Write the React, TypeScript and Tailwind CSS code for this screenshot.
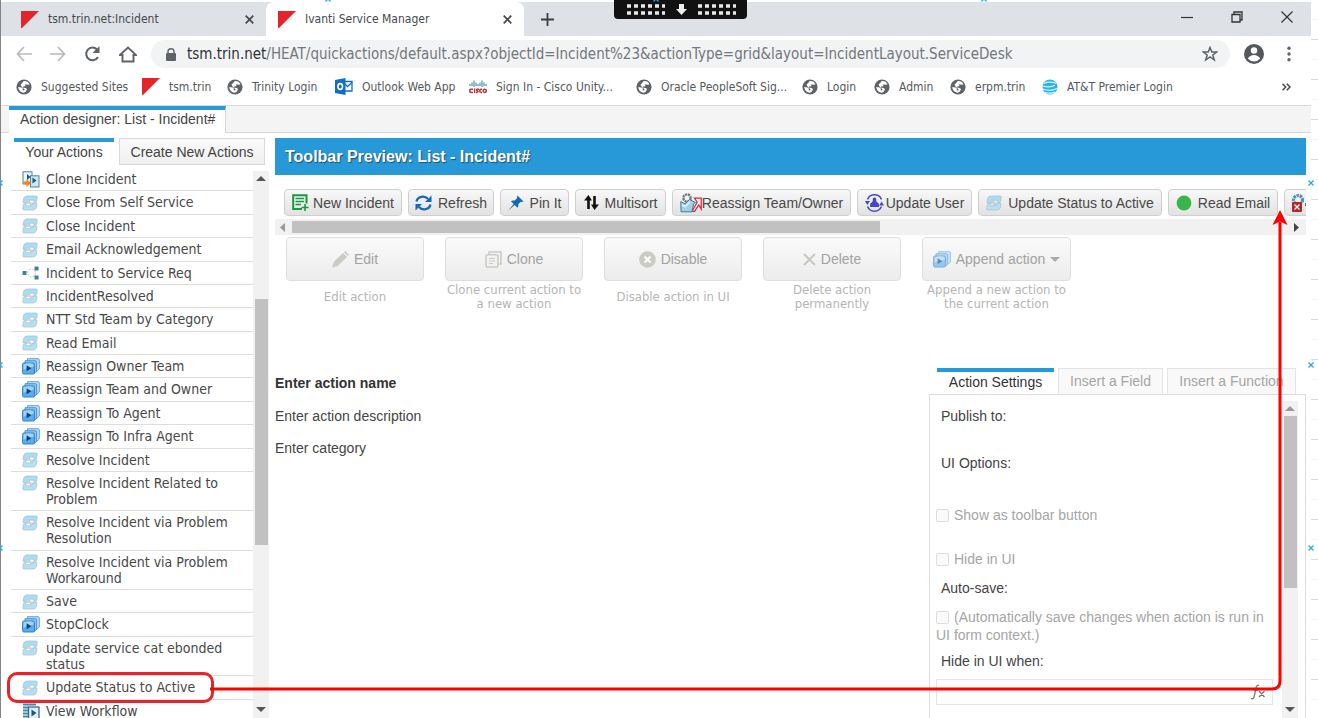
import type { ReactNode } from "react";

const UI = "font-['DejaVu_Sans_Condensed','DejaVu_Sans',sans-serif]";

function Flag() {
  return (
    <svg width="18" height="17" viewBox="0 0 18 17" className="shrink-0">
      <path d="M0 0H18L1 17H0Z" fill="#e3242b" />
    </svg>
  );
}

function Globe() {
  return (
    <svg width="16" height="16" viewBox="0 0 16 16" className="shrink-0">
      <circle cx="8" cy="8" r="7.6" fill="#5f6368" />
      <path d="M7.500 2.200C10 1.800 12.500 3 13.600 5.500L11 5.800 9.500 5 9.200 7.200 7 7.500 7.300 8.800 10 8.900 11 10.500 9.800 12.600 8 13.700C5 13.600 2.400 11.300 2.300 8L5.500 8.400 7 9.800 6.500 11.300 8.200 11.600 8.600 10.400 5.500 7.600 4.500 5.500 6 4.300Z" fill="#fff" />
    </svg>
  );
}

function Outlook() {
  return (
    <svg width="18" height="17" viewBox="0 0 18 17" className="shrink-0">
      <path d="M9 3.500H17V13H9" fill="#fff" stroke="#0f6fc6" strokeWidth="1.300" />
      <path d="M9 5L12.500 8.500 17 4.500" fill="none" stroke="#0f6fc6" strokeWidth="1.300" />
      <path d="M0 2L10.500 0V17L0 15Z" fill="#0f6fc6" />
      <ellipse cx="5.200" cy="8.500" rx="2.300" ry="2.900" fill="none" stroke="#fff" strokeWidth="1.600" />
    </svg>
  );
}

function Cisco() {
  return (
    <svg width="18" height="14" viewBox="0 0 18 14" className="shrink-0">
      <path d="M1 4V6M3 2.500V6M5 0.500V7M7 2.500V6M9 4V6M11 2.500V6M13 0.500V7M15 2.500V6M17 4V6" stroke="#4c93ad" strokeWidth="1.200" />
      <g fill="none" stroke="#b83a41" strokeWidth="1.500">
        <path d="M4 9.300H2.200A1.400 1.400 0 0 0 2.200 12.400H4M5.600 8.600V13M10 9.300H8Q7 10 8.400 10.800T8 12.400H7M13 9.300H12.200A1.400 1.400 0 0 0 12.200 12.400H13" />
        <circle cx="15.700" cy="10.800" r="1.600" />
      </g>
    </svg>
  );
}

function Att() {
  return (
    <svg width="16" height="16" viewBox="0 0 16 16" className="shrink-0">
      <circle cx="8" cy="8" r="7.500" fill="#25b4ec" />
      <path d="M2 4.200Q8 2 14 4.200M0.500 7Q8 9 13 6.300M1 10Q8 13 15 9.500M3 13.200Q8 15.200 13 13" stroke="#dff4fd" strokeWidth="1.200" fill="none" />
    </svg>
  );
}

function Save() {
  return (
    <svg width="16" height="16" viewBox="0 0 16 16" className="shrink-0">
      <path d="M4.500 1H14.500L15.300 2 14.600 6.500 12.500 7.800 11.500 5.200H6.500L5 6.200 3.800 8.300 1 7.700 1.500 4Q2.200 1.200 4.500 1Z" fill="#a6def7" stroke="#a9bcc6" strokeWidth=".7" />
      <path d="M11.500 15H1.500L.700 14 1.400 9.500 3.500 8.200 4.500 10.800H9.500L11 9.800 12.200 7.700 15 8.300 14.500 12Q13.800 14.800 11.500 15Z" fill="#b3e2f7" stroke="#a9bcc6" strokeWidth=".7" />
      <path d="M4.200 8.200L7.500 5.800V7.300L9.300 8 12 8 8.500 10.300V8.800L7 8.200Z" fill="#dbe9ef" stroke="#9db4bf" strokeWidth=".6" />
    </svg>
  );
}

function Stack() {
  return (
    <svg width="18" height="17" viewBox="0 0 18 17" className="shrink-0">
      <path d="M5.500.7H16Q17.300.7 17.300 2V11L14 14V4H5.500Z" fill="#b9dcf8" stroke="#5fa3dc" />
      <path d="M3 2.700H13.300Q14.600 2.700 14.600 4V13.500L12 15.500V6H3Z" fill="#8cc4f2" stroke="#4c97d8" />
      <rect x=".6" y="5" width="11.800" height="11" rx="1.300" fill="#5cabee" stroke="#2f82cc" />
      <path d="M1.500 6.500Q6 4.500 11.500 6V9Q5 9 1.500 12Z" fill="#a5d3f8" />
      <path d="M4.600 7.200L9.300 10.200 4.600 13.200Z" fill="#0b4373" />
    </svg>
  );
}

function CloneAction() {
  return (
    <svg width="18" height="17" viewBox="0 0 18 17" className="shrink-0">
      <rect x="1" y=".8" width="9" height="12" fill="#eaf4f9" stroke="#4c86a3" />
      <rect x="8.500" y="4.800" width="8.500" height="11.200" fill="#cfe5f0" stroke="#4c86a3" />
      <path d="M5 3L8.500 6 5 9ZM10.500 6.500L14.500 9.500 10.500 12.500Z" fill="#15577e" />
      <path d="M1 10.500H4.500V8L9 12 4.500 16V13.500H1Z" fill="#f5821f" />
    </svg>
  );
}

function Nodes() {
  return (
    <svg width="17" height="14" viewBox="0 0 17 14" className="shrink-0">
      <circle cx="9.500" cy="7" r="3.800" fill="none" stroke="#b8b8b8" strokeDasharray="1.500 1.500" />
      <path d="M.5 5H4.500V9H.5ZM12.500.5H16.500V4.500H12.500ZM12.500 9.500H16.500V13.500H12.500Z" fill="#3f8099" />
    </svg>
  );
}

function Workflow() {
  return (
    <svg width="18" height="17" viewBox="0 0 18 17" className="shrink-0">
      <path d="M1 1.500H14M1 4.500H6M1 7.500H6M1 10.500H6M1 13.500H6" stroke="#4a86ab" strokeWidth="1.800" />
      <rect x="6.500" y="4" width="10.500" height="12" fill="#e3eff6" stroke="#2d6e96" strokeWidth="1.300" />
      <path d="M9.500 6.500L14.500 10 9.500 13.500Z" fill="#15577e" />
    </svg>
  );
}

function Tri({ dir, color }: { dir: "up" | "down" | "left" | "right"; color: string }) {
  const d = { up: "M0 6L5 1 10 6Z", down: "M0 2H10L5 7Z", left: "M6 0V9L1 4.500Z", right: "M2 0V9L7 4.500Z" }[dir];
  return (
    <svg width="10" height="9" viewBox="0 0 10 9" className="shrink-0">
      <path d={d} fill={color} />
    </svg>
  );
}

const bookmarks: { icon: ReactNode; label: string; w: string }[] = [
  { icon: <Globe />, label: "Suggested Sites", w: "w-[126px]" },
  { icon: <Flag />, label: "tsm.trin", w: "w-[85px]" },
  { icon: <Globe />, label: "Trinity Login", w: "w-[108px]" },
  { icon: <Outlook />, label: "Outlook Web App", w: "w-[134px]" },
  { icon: <Cisco />, label: "Sign In - Cisco Unity...", w: "w-[167px]" },
  { icon: <Globe />, label: "Oracle PeopleSoft Sig...", w: "w-[166px]" },
  { icon: <Globe />, label: "Login", w: "w-[72px]" },
  { icon: <Globe />, label: "Admin", w: "w-[76px]" },
  { icon: <Globe />, label: "erpm.trin", w: "w-[92px]" },
  { icon: <Att />, label: "AT&T Premier Login", w: "w-[140px]" },
];

const actions: { icon: ReactNode; label: string; tall?: boolean; marked?: boolean }[] = [
  { icon: <CloneAction />, label: "Clone Incident" },
  { icon: <Save />, label: "Close From Self Service" },
  { icon: <Save />, label: "Close Incident" },
  { icon: <Save />, label: "Email Acknowledgement" },
  { icon: <Nodes />, label: "Incident to Service Req" },
  { icon: <Save />, label: "IncidentResolved" },
  { icon: <Save />, label: "NTT Std Team by Category" },
  { icon: <Save />, label: "Read Email" },
  { icon: <Stack />, label: "Reassign Owner Team" },
  { icon: <Stack />, label: "Reassign Team and Owner" },
  { icon: <Stack />, label: "Reassign To Agent" },
  { icon: <Stack />, label: "Reassign To Infra Agent" },
  { icon: <Save />, label: "Resolve Incident" },
  { icon: <Save />, label: "Resolve Incident Related to Problem", tall: true },
  { icon: <Save />, label: "Resolve Incident via Problem Resolution", tall: true },
  { icon: <Save />, label: "Resolve Incident via Problem Workaround", tall: true },
  { icon: <Save />, label: "Save" },
  { icon: <Stack />, label: "StopClock" },
  { icon: <Save />, label: "update service cat ebonded status", tall: true },
  { icon: <Save />, label: "Update Status to Active", marked: true },
  { icon: <Workflow />, label: "View Workflow" },
];

function NewIcon() {
  return (
    <svg width="17" height="17" viewBox="0 0 17 17" className="shrink-0">
      <path d="M10 15H1.200V1.200H14.500V9.500" fill="none" stroke="#189a3c" strokeWidth="2" />
      <path d="M3.500 4.500H12M3.500 7.500H12M3.500 10.500H9M13 10V17M9.500 13.500H16.500" stroke="#189a3c" strokeWidth="1.600" />
    </svg>
  );
}

function RefreshIcon() {
  return (
    <svg width="17" height="16" viewBox="0 0 17 16" className="shrink-0">
      <path d="M1.500 6.500C2.500 1.500 9.500 0 13 4" fill="none" stroke="#1668b3" strokeWidth="2.300" />
      <path d="M15.500 9.500C14.500 14.500 7.500 16 4 12" fill="none" stroke="#1668b3" strokeWidth="2.300" />
      <path d="M16.500.5V7H10ZM.5 15.500V9H7Z" fill="#1668b3" />
    </svg>
  );
}

function PinIcon() {
  return (
    <svg width="16" height="16" viewBox="0 0 16 16" className="shrink-0">
      <path d="M9.500.5L15.500 6.500 13.800 7 12.800 6.700 10.300 9.200Q10.800 11.300 9.500 12.800L6.600 9.900 0 15.800 5.700 9 2.900 6.300Q4.500 5 6.700 5.600L9.200 3.100 8.900 2.100Z" fill="#1668b3" />
    </svg>
  );
}

function SortIcon() {
  return (
    <svg width="15" height="15" viewBox="0 0 15 15" className="shrink-0">
      <path d="M4.500 14V3M10.500 1V12" stroke="#111" strokeWidth="2.600" />
      <path d="M0 5.500L4.500 0 8 5.500ZM7 9.500L10.500 15 15 9.500Z" fill="#111" />
    </svg>
  );
}

function ReassignIcon() {
  return (
    <svg width="22" height="20" viewBox="0 0 22 20" className="shrink-0">
      <circle cx="7" cy="5" r="3.600" fill="none" stroke="#777" strokeWidth="2.400" strokeDasharray="2.200 .7" />
      <path d="M14.500 5.200H21.200V16L18.800 12 14.500 18.300H12L17.200 9.200Z" fill="#fff" stroke="#d42a38" strokeWidth="1.300" />
      <path d="M.8 8.500L5 11 9.500 6.500 15.500 9.500 13.500 11 12 18.800H1Z" fill="#9fd0e4" stroke="#3c7f9f" />
      <path d="M2 12L5 13.500 10 9" fill="none" stroke="#e6f5fa" strokeWidth="1.500" />
    </svg>
  );
}

function UserIcon() {
  return (
    <svg width="19" height="18" viewBox="0 0 19 18" className="shrink-0">
      <path d="M2.500 5.500A7.600 7.600 0 0 1 16.500 5.500M16.500 12.500A7.600 7.600 0 0 1 2.500 12.500" fill="none" stroke="#4349c4" strokeWidth="1.500" />
      <path d="M0 7H5L2.300 11ZM14 11.500H19L16.700 7.500Z" fill="#4349c4" />
      <path d="M9.500 3.500Q11.700 3.500 11.200 6.500 11 8 13.800 9.500L14 13H5L5.200 9.500Q8 8 7.800 6.500 7.300 3.500 9.500 3.500Z" fill="#4349c4" />
    </svg>
  );
}

function GearX() {
  return (
    <svg width="20" height="20" viewBox="0 0 20 20" className="shrink-0">
      <circle cx="8" cy="7" r="4.500" fill="none" stroke="#5590b0" strokeWidth="3.200" strokeDasharray="2.400 .8" />
      <rect x="2" y="9" width="10" height="10" rx="1" fill="#b3262b" />
      <path d="M4.500 11.500L9.500 16.500M9.500 11.500L4.500 16.500" stroke="#fff" strokeWidth="1.400" />
      <rect x="15" y="10" width="3" height="3" fill="#3c7f9f" />
    </svg>
  );
}

const toolbar: { icon: ReactNode; label: string; cls: string }[] = [
  { icon: <NewIcon />, label: "New Incident", cls: "w-[118px] gap-1" },
  { icon: <RefreshIcon />, label: "Refresh", cls: "w-[86px] gap-1.5" },
  { icon: <PinIcon />, label: "Pin It", cls: "w-[69px] gap-1.5" },
  { icon: <SortIcon />, label: "Multisort", cls: "w-[91px] gap-1.5" },
  { icon: <ReassignIcon />, label: "Reassign Team/Owner", cls: "w-[179px] gap-0" },
  { icon: <UserIcon />, label: "Update User", cls: "w-[115px] gap-0.5" },
  { icon: <Save />, label: "Update Status to Active", cls: "w-[184px] gap-1.5" },
  {
    icon: (
      <svg width="16" height="16" viewBox="0 0 16 16" className="shrink-0">
        <circle cx="8" cy="8" r="7.400" fill="#39b54a" />
      </svg>
    ),
    label: "Read Email",
    cls: "w-[110px] gap-1.5",
  },
];

const editors: { icon: ReactNode; label: string; hint: string; w: string; hintW: string; menu?: boolean }[] = [
  {
    icon: (
      <svg width="17" height="17" viewBox="0 0 17 17">
        <path d="M0 16.500L1.800 11 11 2 15 6 5.700 15ZM12 1.200L13.300 0 17 3.700 15.900 5Z" fill="#c9cbc4" />
      </svg>
    ),
    label: "Edit",
    hint: "Edit action",
    w: "w-[138px]",
    hintW: "w-[138px]",
  },
  {
    icon: (
      <svg width="17" height="17" viewBox="0 0 17 17" fill="none" stroke="#c9cbc4" strokeWidth="1.600">
        <path d="M4 3V1H16V13H14" />
        <rect x="1" y="3.800" width="12" height="12.200" rx="1.500" />
        <path d="M4 7.500H10M4 10H10M4 12.500H8" strokeWidth="1.200" />
      </svg>
    ),
    label: "Clone",
    hint: "Clone current action to a new action",
    w: "w-[138px]",
    hintW: "w-[138px]",
  },
  {
    icon: (
      <svg width="17" height="17" viewBox="0 0 17 17">
        <circle cx="8.500" cy="8.500" r="8.300" fill="#c9cbc4" />
        <path d="M5.500 5.500L11.500 11.500M11.500 5.500L5.500 11.500" stroke="#fff" strokeWidth="2" />
      </svg>
    ),
    label: "Disable",
    hint: "Disable action in UI",
    w: "w-[138px]",
    hintW: "w-[138px]",
  },
  {
    icon: (
      <svg width="13" height="13" viewBox="0 0 13 13">
        <path d="M1 1L12 12M12 1L1 12" stroke="#c6c8c0" strokeWidth="2" />
      </svg>
    ),
    label: "Delete",
    hint: "Delete action permanently",
    w: "w-[138px]",
    hintW: "w-[90px]",
  },
  {
    icon: <span className="opacity-60"><Stack /></span>,
    label: "Append action",
    hint: "Append a new action to the current action",
    w: "w-[149px]",
    hintW: "w-[149px]",
    menu: true,
  },
];

function Chrome() {
  return (
    <header className={`shrink-0 ${UI}`}>
      <div className="mt-0.5 flex h-[34px] bg-[#dee1e6] text-xs text-[#45494d]">
        <div className="flex w-[266px] items-center rounded-br-lg pl-[21px] pr-[10px]">
          <Flag />
          <span className="ml-[9px] flex-1">tsm.trin.net:Incident</span>
          <button aria-label="Close tab" className="p-0.5">
            <svg width="9" height="9" viewBox="0 0 9 9"><path d="M.7.7L8.300 8.300M8.300.7L.7 8.300" stroke="#45494d" strokeWidth="1.700" /></svg>
          </button>
        </div>
        <div className="flex w-[258px] items-center rounded-t-lg bg-white pl-[12px] pr-[10px]">
          <Flag />
          <span className="ml-[9px] flex-1">Ivanti Service Manager</span>
          <button aria-label="Close tab" className="p-0.5">
            <svg width="9" height="9" viewBox="0 0 9 9"><path d="M.7.7L8.300 8.300M8.300.7L.7 8.300" stroke="#45494d" strokeWidth="1.700" /></svg>
          </button>
        </div>
        <button aria-label="New tab" className="ml-[17px]">
          <svg width="13" height="13" viewBox="0 0 13 13"><path d="M6.500 0V13M0 6.500H13" stroke="#3c4043" strokeWidth="1.800" /></svg>
        </button>
        <div className="ml-auto mb-1 flex items-center gap-[38px] pr-[18px]">
          <button aria-label="Minimize"><svg width="12" height="12" viewBox="0 0 12 12"><path d="M0 6.500H12" stroke="#333" strokeWidth="1.200" /></svg></button>
          <button aria-label="Restore"><svg width="12" height="12" viewBox="0 0 12 12"><path d="M1 3.500H9V11H1ZM3 3V1H11V9H9" fill="none" stroke="#333" strokeWidth="1.300" /></svg></button>
          <button aria-label="Close"><svg width="12" height="12" viewBox="0 0 12 12"><path d="M.5.5L11.500 11.500M11.500.5L.5 11.500" stroke="#333" strokeWidth="1.200" /></svg></button>
        </div>
      </div>
      <div className="flex h-9 items-center bg-white pl-[16px] pr-[14px]">
        <div className="flex w-[135px] items-center gap-[18px]">
          <button aria-label="Back"><svg width="16" height="16" viewBox="0 0 16 16"><path d="M8 1L1.500 8 8 15M1.500 8H16" fill="none" stroke="#b6b9bd" strokeWidth="1.700" /></svg></button>
          <button aria-label="Forward"><svg width="16" height="16" viewBox="0 0 16 16"><path d="M8 1L14.500 8 8 15M14.500 8H0" fill="none" stroke="#b6b9bd" strokeWidth="1.700" /></svg></button>
          <button aria-label="Reload"><svg width="17" height="16" viewBox="0 0 17 16"><path d="M14 11A6.300 6.300 0 1 1 13 3.500" fill="none" stroke="#5f6368" strokeWidth="2" /><path d="M15.500 0V7H8.500Z" fill="#5f6368" /></svg></button>
          <button aria-label="Home"><svg width="18" height="17" viewBox="0 0 18 17"><path d="M1 9L9 1.500 17 9H14.500V15.500H3.500V9Z" fill="none" stroke="#5f6368" strokeWidth="1.900" /></svg></button>
        </div>
        <div className="flex h-7 flex-1 items-center rounded-full bg-[#f1f3f4] pl-[15px] pr-3">
          <svg width="10" height="13" viewBox="0 0 10 13" className="shrink-0"><rect y="5" width="10" height="8" rx="1" fill="#5f6368" /><path d="M2 5V3.500A3 2.800 0 0 1 8 3.500V5" fill="none" stroke="#5f6368" strokeWidth="1.400" /></svg>
          <span className="ml-[11px] flex-1 whitespace-nowrap text-[15px] text-[#74777b]">
            <span className="text-[#303336]">tsm.trin.net</span>/HEAT/quickactions/default.aspx?objectId=Incident%23&amp;actionType=grid&amp;layout=IncidentLayout.ServiceDesk
          </span>
          <button aria-label="Bookmark this page"><svg width="16" height="16" viewBox="0 0 16 16"><path d="M8 1.500L9.800 6H14.800L10.800 9 12.300 14 8 11 3.700 14 5.200 9 1.200 6H6.200Z" fill="none" stroke="#5f6368" strokeWidth="1.500" /></svg></button>
        </div>
        <button aria-label="Profile" className="ml-[14px]">
          <svg width="20" height="20" viewBox="0 0 20 20"><circle cx="10" cy="10" r="10" fill="#54585c" /><circle cx="10" cy="6.500" r="3.200" fill="#fff" /><path d="M3.800 14.500Q6 11 10 11T16.200 14.500Q13.500 17.500 10 17.500T3.800 14.500Z" fill="#fff" /></svg>
        </button>
        <button aria-label="Menu" className="ml-[23px] mr-[6px]">
          <svg width="4" height="16" viewBox="0 0 4 16" fill="#5f6368"><circle cx="2" cy="2.300" r="1.700" /><circle cx="2" cy="8" r="1.700" /><circle cx="2" cy="13.700" r="1.700" /></svg>
        </button>
      </div>
      <nav className="flex h-[34px] items-center border-b border-[#dadada] bg-white pb-1 pl-[16px] text-xs text-[#55595d]">
        {bookmarks.map((b) => (
          <a key={b.label} href="#" className={`flex shrink-0 items-center gap-[9px] whitespace-nowrap ${b.w}`}>
            {b.icon}
            {b.label}
          </a>
        ))}
        <button aria-label="More bookmarks" className="ml-auto mr-[20px]">
          <svg width="9" height="8" viewBox="0 0 9 8"><path d="M.5.800L3.700 4 .5 7.200M4.800.800L8 4 4.800 7.200" fill="none" stroke="#45494d" strokeWidth="1.500" /></svg>
        </button>
      </nav>
    </header>
  );
}

function Sidebar() {
  return (
    <aside className="flex w-[275px] shrink-0 flex-col pl-[6px] pr-[6px]">
      <div className="flex h-[27px] shrink-0 pl-2 text-sm text-[#444]">
        <button className="w-[100px] border-t-4 border-[#2899d8] bg-white pb-[3px]">Your Actions</button>
        <button className="ml-[5px] w-[146px] border border-[#d8d8d8] bg-linear-to-b from-[#fafafa] to-[#efefef]">Create New Actions</button>
      </div>
      <div className="flex min-h-0 flex-1 pl-[5px]">
        <ul className={`flex h-[calc(100%+5px)] flex-1 flex-col pt-[3px] text-sm leading-4 text-[#484848] ${UI}`}>
          {actions.map((a) => (
            <li
              key={a.label}
              className={`relative flex grow items-start border-b border-[#dedede] pl-[11px] pt-[3px] ${a.tall ? "basis-[39px]" : "basis-[23px]"}`}
            >
              <span className="flex h-[17px] w-[24px] shrink-0 items-center">{a.icon}</span>
              <a href="#" className="w-[196px]">{a.label}</a>
              {a.marked && <span className="absolute -left-1 -top-[4px] h-[31px] w-[207px] rounded-[10px] border-3 border-[#e8232b]" />}
            </li>
          ))}
        </ul>
        <div className="mt-[6px] flex w-4 flex-col items-center bg-[#f1f1f1] py-1">
          <Tri dir="up" color="#555" />
          <div className="mt-[115px] h-[246px] w-[13px] bg-[#c1c1c1]" />
          <span className="mt-auto"><Tri dir="down" color="#555" /></span>
        </div>
      </div>
    </aside>
  );
}

function Settings() {
  const check = "mr-[5px] inline-block size-[13px] shrink-0 appearance-none rounded-[2px] border border-[#ddd] bg-[#fafafa] align-[-2px]";
  return (
    <section className="flex w-[377px] shrink-0 flex-col text-sm text-[#444]">
      <div className="flex h-[26px] shrink-0 pl-2">
        <button className="w-[117px] border-t-4 border-[#2899d8] pb-[3px] text-[#333]">Action Settings</button>
        <button className="ml-1 w-[105px] border border-b-0 border-[#e4e4e4] bg-[#f9f9f9] pb-px text-[#a5a5a5]">Insert a Field</button>
        <button className="ml-1 w-[129px] border border-b-0 border-[#e4e4e4] bg-[#f9f9f9] pb-px text-[#a5a5a5]">Insert a Function</button>
      </div>
      <div className="flex min-h-0 flex-1 border border-b-0 border-[#dcdcdc]">
        <div className="min-w-0 flex-1 pl-[6px] pt-3 leading-[18px]">
          <p className="pl-[5px]">Publish to:</p>
          <p className="mt-[29px] pl-[5px]">UI Options:</p>
          <label className="mt-[34px] block text-[#a5a5a5]"><input type="checkbox" disabled className={check} />Show as toolbar button</label>
          <label className="mt-[26px] block text-[#a5a5a5]"><input type="checkbox" disabled className={check} />Hide in UI</label>
          <p className="mt-[11px] pl-[5px]">Auto-save:</p>
          <label className="mt-[11px] block pr-4 text-[#a5a5a5]"><input type="checkbox" disabled className={check} />(Automatically save changes when action is run in UI form context.)</label>
          <label htmlFor="hide-when" className="mt-2 block pl-[5px]">Hide in UI when:</label>
          <div className="mt-[9px] flex h-[26px] w-[337px] items-center border border-[#e4e4e4] pr-[6px]">
            <input id="hide-when" className="min-w-0 flex-1 outline-none" />
            <svg width="16" height="16" viewBox="0 0 16 16" fill="none" stroke="#777" strokeWidth="1.300"><path d="M9 1.500Q6.800.5 6 4L4.200 12.500Q3.500 15.500 1 14.500M3.500 6H8M9 7L14.500 13M14.500 7L9 13" /></svg>
          </div>
        </div>
        <div className="mr-[7px] mt-[6px] flex w-4 flex-col items-center bg-[#f1f1f1] py-1">
          <Tri dir="up" color="#999" />
          <div className="mt-0.5 h-[172px] w-[13px] bg-[#c1c1c1]" />
          <span className="mt-auto"><Tri dir="down" color="#555" /></span>
        </div>
      </div>
    </section>
  );
}

function Main() {
  return (
    <main className="flex min-w-0 flex-1 flex-col pr-[5px]">
      <h1 className="flex h-[37px] shrink-0 items-center bg-[#2899d8] pl-[10px] text-base font-bold text-white [text-shadow:1px_1px_1px_#24506c]">
        Toolbar Preview: List - Incident#
      </h1>
      <div className="mt-[14px] flex shrink-0 gap-[6px] overflow-hidden pl-[9px] text-sm text-[#484848]">
        {toolbar.map((t) => (
          <button key={t.label} className={`flex h-[27px] shrink-0 items-center justify-center whitespace-nowrap rounded-[4px] border border-[#cfcfcf] bg-linear-to-b from-[#f8f8f8] to-[#e2e2e2] ${t.cls}`}>
            {t.icon}
            {t.label}
          </button>
        ))}
        <button aria-label="Remove action" className="flex h-[27px] w-[60px] shrink-0 items-center rounded-[4px] border border-[#cfcfcf] bg-linear-to-b from-[#f8f8f8] to-[#e2e2e2] pl-[5px]"><GearX /></button>
      </div>
      <div className="mt-[3px] flex h-4 shrink-0 items-center bg-[#f1f1f1] pl-1 pr-1">
        <Tri dir="left" color="#999" />
        <div className="ml-[3px] h-3 w-[588px] bg-[#c1c1c1]" />
        <span className="ml-auto"><Tri dir="right" color="#444" /></span>
      </div>
      <div className="mt-0.5 flex shrink-0 gap-[21px] pl-[11px]">
        {editors.map((e) => (
          <div key={e.label} className={`flex shrink-0 flex-col items-center ${e.w}`}>
            <button disabled className="flex h-11 w-full items-center justify-center gap-[5px] rounded-[4px] border border-[#dedede] bg-linear-to-b from-[#fafafa] to-[#ececec] text-sm text-[#a2a2a2]">
              {e.icon}
              {e.label}
              {e.menu && <Tri dir="down" color="#aaa" />}
            </button>
            <p className={`flex h-8 items-center justify-center text-center text-[13px] leading-[14px] text-[#b5b5b5] ${UI} ${e.hintW}`}>{e.hint}</p>
          </div>
        ))}
      </div>
      <div className="mt-[55px] flex min-h-0 flex-1">
        <div className="flex-1 pt-[7px] text-sm leading-4 text-[#444]">
          <p className="font-bold text-[#333]">Enter action name</p>
          <p className="mt-[17px]">Enter action description</p>
          <p className="mt-[16px]">Enter category</p>
        </div>
        <Settings />
      </div>
    </main>
  );
}

function Handle({ at }: { at: string }) {
  return (
    <svg width="6" height="6" viewBox="0 0 6 6" className={`absolute ${at}`}>
      <path d="M.5.5L5.500 5.500M5.500.5L.5 5.500" stroke="#29a9e0" strokeWidth="1.300" />
    </svg>
  );
}

export default function App() {
  return (
    <div className="relative flex h-screen overflow-hidden bg-white font-['Liberation_Sans',Arial,sans-serif]">
      <div className="flex min-w-0 flex-1 flex-col">
        <Chrome />
        <div className="flex h-[27px] shrink-0 border-b border-[#d6d6d6] bg-[#f4f4f4] pl-[9px]">
          <div className="h-[27px] w-[217px] border-t-4 border-r border-t-[#2899d8] border-r-[#d6d6d6] bg-white pl-[11px] text-sm leading-[19px] text-[#444]">
            Action designer: List - Incident#
          </div>
        </div>
        <div className="flex min-h-0 flex-1 pt-[5px]">
          <Sidebar />
          <Main />
        </div>
      </div>
      <div className="w-[7px] shrink-0 bg-[repeating-linear-gradient(to_bottom,#fff_0px,#fff_19px,#f6f6f6_19px,#f6f6f6_20px,#fff_20px,#fff_39px,#dcdcdc_39px,#dcdcdc_40px)]" />

      <div className="absolute inset-y-0 left-0 w-px bg-[#858585]" />
      <div className="absolute left-[614px] top-0 flex h-[19px] w-[133px] items-center justify-center rounded-b-[4px] bg-[#111] pb-0.5">
        <svg width="112" height="14" viewBox="0 0 112 14">
          <path d="M2 4H40M2 11H40M73 4H111M73 11H111" stroke="#e8e8e8" strokeWidth="3.500" strokeDasharray="4 3" />
          <path d="M54 2H59V7H62L56.500 13 51 7H54Z" fill="#eee" />
        </svg>
      </div>
      <Handle at="left-[325px] -top-[4px]" />
      <Handle at="left-[653px] -top-[4px]" />
      <Handle at="left-[981px] -top-[4px]" />
      <Handle at="right-[4px] top-[180px]" />
      <Handle at="right-[4px] top-[362px]" />
      <Handle at="right-[4px] top-[545px]" />
      <Handle at="-left-[3px] top-[180px]" />
      <Handle at="-left-[3px] top-[362px]" />
      <Handle at="-left-[3px] top-[545px]" />
      <svg width="1318" height="718" viewBox="0 0 1318 718" className="pointer-events-none absolute left-0 top-0">
        <path d="M210 689H1272Q1280 689 1280 681V222" fill="none" stroke="#f00" strokeWidth="3" />
        <path d="M1280 210L1287.500 225 1280 221.500 1272.500 225Z" fill="#f00" />
      </svg>
    </div>
  );
}
